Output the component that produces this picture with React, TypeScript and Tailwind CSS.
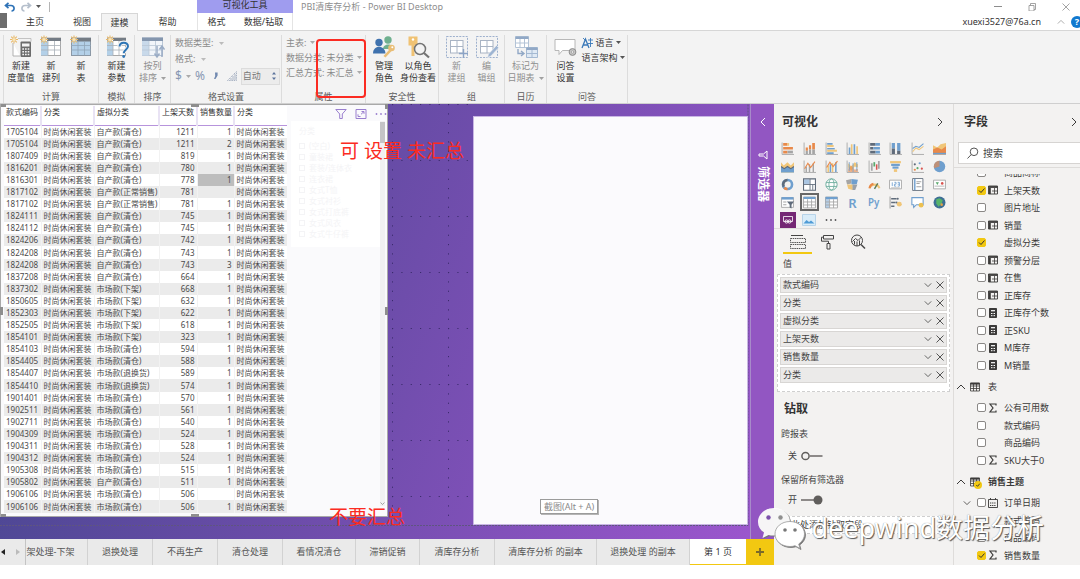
import React from "react";

type Row = [string, string, string, string, string?];

const rows: Row[] = [
  ["1705104", "自产款(清仓)", "1211", "1"],
  ["1705104", "自产款(清仓)", "1211", "2"],
  ["1807409", "自产款(清仓)", "819", "1"],
  ["1816201", "自产款(清仓)", "780", "1"],
  ["1816301", "自产款(清仓)", "778", "1", "sel"],
  ["1817102", "自产款(正常销售)", "781", ""],
  ["1817102", "自产款(正常销售)", "781", "1"],
  ["1824111", "自产款(清仓)", "745", "1"],
  ["1824112", "自产款(清仓)", "745", "1"],
  ["1824206", "自产款(清仓)", "742", "1"],
  ["1824208", "自产款(清仓)", "743", "1"],
  ["1824208", "自产款(清仓)", "743", "3"],
  ["1837208", "自产款(清仓)", "664", "1"],
  ["1837302", "市场款(下架)", "668", "1"],
  ["1850605", "市场款(下架)", "632", "1"],
  ["1852303", "市场款(下架)", "622", "1"],
  ["1852505", "市场款(下架)", "618", "1"],
  ["1854101", "市场款(下架)", "323", "1"],
  ["1854103", "市场款(清仓)", "594", "1"],
  ["1854405", "市场款(清仓)", "588", "1"],
  ["1854407", "市场款(退换货)", "589", "1"],
  ["1854410", "市场款(退换货)", "574", "1"],
  ["1901401", "市场款(清仓)", "570", "1"],
  ["1902511", "市场款(清仓)", "561", "1"],
  ["1902711", "市场款(清仓)", "540", "1"],
  ["1904309", "市场款(清仓)", "524", "1"],
  ["1904311", "市场款(清仓)", "528", "1"],
  ["1904312", "市场款(清仓)", "524", "1"],
  ["1905308", "市场款(清仓)", "515", "1"],
  ["1905802", "自产款(清仓)", "511", "1"],
  ["1906106", "市场款(清仓)", "506", ""],
  ["1906106", "市场款(清仓)", "506", "1"],
];

/* ---------- small glyphs ---------- */

function Caret({ className = "text-[#555]" }: { className?: string }) {
  return (
    <svg viewBox="0 0 5 3" className={"inline-block h-[3px] w-[5px] shrink-0 " + className}>
      <path d="M0 0h5L2.5 3z" fill="currentColor" />
    </svg>
  );
}

function Chevron({ dir, className = "h-2 w-2" }: { dir: "up" | "down" | "left" | "right"; className?: string }) {
  const d = {
    up: "M1 7l4-4 4 4",
    down: "M1 3l4 4 4-4",
    left: "M7 1L3 5l4 4",
    right: "M3 1l4 4-4 4",
  }[dir];
  return (
    <svg viewBox="0 0 10 10" className={"shrink-0 " + className} fill="none" stroke="currentColor" strokeWidth="1">
      <path d={d} />
    </svg>
  );
}

const Spark = () => (
  <g>
    <path d="M5 .5v8M1 4.5h8M2.2 1.7l5.6 5.6M7.8 1.7L2.2 7.3" stroke="#e8b96a" strokeWidth="1.1" />
    <circle cx="5" cy="4.5" r="1.6" fill="#fbe6b8" />
  </g>
);

function BigIcon({ children }: { children: React.ReactNode }) {
  return (
    <svg viewBox="0 0 24 24" className="h-6 w-6" fill="none">
      {children}
    </svg>
  );
}

const icons = {
  measure: (
    <BigIcon>
      <path d="M4 8v13h7" stroke="#a9a9a9" strokeWidth=".9" fill="#fff" />
      <path d="M9 3.5h13v3" stroke="#bdbdbd" strokeWidth=".9" />
      <rect x="11.5" y="6.5" width="10.5" height="15.5" rx="1" fill="#6c6c6c" />
      <rect x="13" y="8.5" width="7.5" height="3" fill="#f3f3f3" />
      <path d="M13.3 14h7M13.3 16.8h7M13.3 19.6h7" stroke="#f3f3f3" strokeWidth="1.5" strokeDasharray="1.7 1" />
      <Spark />
    </BigIcon>
  ),
  column: (
    <BigIcon>
      <rect x="2.5" y="3" width="19" height="17.5" fill="#fff" stroke="#a8a8a8" />
      <rect x="2" y="6" width="7" height="14.5" fill="#b3d0e8" />
      <path d="M8 3h14v3H8z" fill="#747c85" />
      <path d="M2 10.5h20M2 15h20M9 6v14.5M15.5 6v14.5" stroke="#a8b0b8" strokeWidth=".8" />
      <Spark />
    </BigIcon>
  ),
  table: (
    <BigIcon>
      <rect x="2.5" y="3" width="19" height="17.5" fill="#b3d0e8" stroke="#8b98a5" />
      <path d="M8 3h14v3.5H8z" fill="#747c85" />
      <path d="M2 10.5h20M2 15h20M9 6v14.5M15.5 6v14.5" stroke="#8fa5b8" strokeWidth=".8" />
      <Spark />
    </BigIcon>
  ),
  param: (
    <BigIcon>
      <rect x="2.5" y="3" width="18" height="17.5" fill="#fff" stroke="#a8a8a8" />
      <rect x="2" y="6" width="6" height="14.5" fill="#b3d0e8" />
      <path d="M8 3h13v3H8z" fill="#747c85" />
      <path d="M2 10.5h18M2 15h18M8 6v14.5M14 6v14.5" stroke="#a8b0b8" strokeWidth=".8" />
      <path d="M14 12c0-6 9-5.5 9-.8 0 3.3-4.3 3.6-4.3 7" stroke="#f3f3f3" strokeWidth="4" />
      <path d="M14.5 11.5c.3-5 8.5-4.8 8.5-.3 0 3.3-4.3 3.6-4.3 7" stroke="#2e75b5" strokeWidth="2" />
      <circle cx="18.7" cy="21.5" r="1.4" fill="#2e75b5" />
      <Spark />
    </BigIcon>
  ),
  sort: (
    <BigIcon>
      <rect x="1.5" y="3" width="20" height="17.5" fill="#f1f5fa" stroke="#b9c6d6" />
      <path d="M1 2.5h21V6H1z" fill="#8496ae" />
      <path d="M1 6h7v14.5H1z" fill="#c8d9ea" />
      <path d="M1 10.5h20M1 15h20M8 6v14.5M14.5 6v14.5" stroke="#b9c6d6" strokeWidth=".8" />
      <path d="M16 11v10M13.5 18.5L16 22l2.5-3.5M21 22V12M18.5 14.5L21 11l2.5 3.5" stroke="#9aacc5" strokeWidth="1.5" />
    </BigIcon>
  ),
  roles: (
    <BigIcon>
      <circle cx="16" cy="5" r="3.7" fill="#6fb08f" />
      <path d="M11 14c0-6 10.5-6 10.5 0z" fill="#6fb08f" />
      <circle cx="7" cy="7.5" r="3.7" fill="#3f72ae" />
      <path d="M1 18.5c0-9 12-9 12.5 0z" fill="#3f72ae" />
      <circle cx="19.5" cy="13" r="3.3" fill="#e9be77" />
      <path d="M18 14l-6.5 7 2 1.5 7-7.5" fill="#e9be77" />
      <circle cx="20.3" cy="12.3" r="1" fill="#fff" />
    </BigIcon>
  ),
  viewas: (
    <BigIcon>
      <path d="M2.5 1.5h9v9h-3v10.5h-3V10.5h-3z" fill="#f0c273" />
      <circle cx="7" cy="4.5" r="1.2" fill="#fff" />
      <circle cx="14" cy="14" r="5.5" fill="#f3f3f3" stroke="#747474" strokeWidth="1.5" />
      <path d="M18 18l5 4.5" stroke="#747474" strokeWidth="2.2" />
    </BigIcon>
  ),
  newgroup: (
    <BigIcon>
      <rect x="1.5" y="1.5" width="21" height="21" stroke="#93a8c8" strokeDasharray="2 1.2" strokeWidth=".9" />
      <rect x="5.5" y="5.5" width="12.5" height="12.5" fill="#fff" stroke="#a9b4c4" />
      <path d="M12 5v13M5 11.5h13" stroke="#a9b4c4" />
      <path d="M18.5 14v9M14 18.5h9" stroke="#8ba3c5" strokeWidth="1.4" />
    </BigIcon>
  ),
  editgroup: (
    <BigIcon>
      <rect x="1.5" y="1.5" width="21" height="21" stroke="#93a8c8" strokeDasharray="2 1.2" strokeWidth=".9" />
      <rect x="5.5" y="5.5" width="12.5" height="12.5" fill="#fff" stroke="#a9b4c4" />
      <path d="M12 5v13M5 11.5h13" stroke="#a9b4c4" />
      <path d="M12.5 22.5l1-3.5 8-8.5 2.2 2.2-8 8.5z" fill="#9db4d2" stroke="#f3f3f3" strokeWidth=".6" />
    </BigIcon>
  ),
  date: (
    <BigIcon>
      <path d="M1.5 1.5h13v11h-13z" fill="#fff" stroke="#b3c3d6" />
      <path d="M1.5 1.5h13V4h-13z" fill="#91a8c6" />
      <path d="M1.5 8h13M6 4v8.5M10.5 4v8.5" stroke="#b3c3d6" />
      <path d="M12.5 12.5h11v10h-11z" fill="#dfe9f4" stroke="#a4b9d2" />
      <path d="M12.5 12.5h11V15h-11z" fill="#91a8c6" />
      <path d="M12.5 18.5h11M18 15v7.5" stroke="#a4b9d2" />
      <path d="M4 14v4.500h5M7 16l3 2.500L7 21" stroke="#91a8c6" strokeWidth="1.4" />
    </BigIcon>
  ),
  qna: (
    <BigIcon>
      <path d="M2 4.5h20v11H9.5L6 19.5v-4H2z" fill="#fff" stroke="#b0b0b0" strokeWidth=".9" />
      <circle cx="19.5" cy="17" r="3.4" fill="#c4c4c4" stroke="#8c8c8c" />
      <circle cx="19.5" cy="17" r="1.2" fill="#f3f3f3" stroke="#8c8c8c" strokeWidth=".6" />
    </BigIcon>
  ),
};

/* ---------- ribbon ---------- */

function BigButton({ icon, l1, l2, muted, caret, className }: { icon: React.ReactNode; l1: string; l2: string; muted?: boolean; caret?: boolean; className: string }) {
  return (
    <button type="button" className={"flex shrink-0 flex-col items-center whitespace-nowrap leading-3 " + (muted ? "text-[#8f8f8f] " : "text-[#333] ") + className}>
      {icon}
      <span className="mt-px">{l1}</span>
      <span className="flex items-center gap-1">
        {l2}
        {caret && <Caret className="text-[#a0a0a0]" />}
      </span>
    </button>
  );
}

function Group({ title, className, children }: { title: string; className: string; children: React.ReactNode }) {
  return (
    <section className={"relative flex shrink-0 flex-col border-r border-[#dcdcdc] " + className}>
      <div className="flex h-14 justify-center">{children}</div>
      <h3 className="text-center leading-3 text-[#5c5c5c]">{title}</h3>
    </section>
  );
}

function DropText({ label, value }: { label: string; value?: string }) {
  return (
    <button type="button" className="flex items-center gap-0.5 whitespace-nowrap text-left leading-[15px]">
      <span>{label}</span>
      {value && <span>{value}</span>}
      <Caret className="ml-0.5 text-[#aaa]" />
    </button>
  );
}

function Ribbon() {
  return (
    <div className="flex border-b border-[#cfcfcf] bg-[#f3f3f3] pt-1 pl-[3px] text-[9px]">
      <Group title="计算" className="w-24 border-l">
        <BigButton icon={icons.measure} l1="新建" l2="度量值" className="w-8" />
        <BigButton icon={icons.column} l1="新" l2="建列" className="w-7" />
        <BigButton icon={icons.table} l1="新" l2="表" className="w-8" />
      </Group>
      <Group title="模拟" className="w-9">
        <BigButton icon={icons.param} l1="新建" l2="参数" className="w-8" />
      </Group>
      <Group title="排序" className="w-9">
        <BigButton icon={icons.sort} l1="按列" l2="排序" muted caret className="w-8" />
      </Group>
      <Group title="格式设置" className="w-[111px]">
        <div className="flex w-full flex-col pl-1 text-[#8a8a8a]">
          <button type="button" className="flex items-center gap-1.5 leading-4">数据类型:<Caret className="text-[#bbb]" /></button>
          <button type="button" className="flex items-center gap-1.5 leading-4">格式:<Caret className="text-[#bbb]" /></button>
          <div className="flex items-center gap-1 text-[#8797b2]">
            <button type="button" className="flex items-center gap-1 text-[12px]">$<Caret className="text-[#aaa]" /></button>
            <button type="button" className="text-[12px]">%</button>
            <button type="button" aria-label="千位分隔符" className="px-1">
              <svg viewBox="0 0 6 10" className="h-2.5 w-1.5"><path d="M2 1.5h2.6v3L2.5 8H1l1.2-3z" fill="#7189b0" /></svg>
            </button>
            <svg viewBox="0 0 10 10" className="h-2.5 w-2.5 shrink-0"><path d="M.5 9.5L9.5.5v9z" fill="none" stroke="#a9b3c4" strokeDasharray="1.5 .8" /><path d="M4 9V7M6 9V5M8 9V3" stroke="#a9b3c4" /></svg>
            <label className="flex h-[17px] w-[39px] items-center border border-[#dcdcdc] bg-[#ececec] px-px text-[#777]">
              <input aria-label="小数位数" defaultValue="自动" className="w-6 bg-transparent outline-none" />
              <svg viewBox="0 0 6 10" className="ml-1 h-2.5 w-1.5 shrink-0"><path d="M1 3.5L3 1l2 2.5zM1 6.5L3 9l2-2.5z" fill="#5b739c" /></svg>
            </label>
          </div>
        </div>
      </Group>
      <Group title="属性" className="w-21">
        <div className="flex w-full flex-col pl-1 text-[#8a8a8a]">
          <DropText label="主表:" />
          <DropText label="数据分类:" value="未分类" />
          <DropText label="汇总方式:" value="未汇总" />
        </div>
        <div className="absolute top-1 -right-px h-[59px] w-[50px] rounded-sm border-2 border-[#fb2b22]" />
      </Group>
      <Group title="安全性" className="w-[73px]">
        <BigButton icon={icons.roles} l1="管理" l2="角色" className="w-8" />
        <BigButton icon={icons.viewas} l1="以角色" l2="身份查看" className="w-9" />
      </Group>
      <Group title="组" className="w-[66px]">
        <BigButton icon={icons.newgroup} l1="新" l2="建组" muted className="w-[30px]" />
        <BigButton icon={icons.editgroup} l1="编" l2="辑组" muted className="w-[30px]" />
      </Group>
      <Group title="日历" className="w-[42px]">
        <BigButton icon={icons.date} l1="标记为" l2="日期表" muted caret className="w-10" />
      </Group>
      <Group title="问答" className="w-[81px]">
        <BigButton icon={icons.qna} l1="问答" l2="设置" className="w-8" />
        <div className="flex flex-col text-[#333]">
          <button type="button" className="flex items-center gap-0.5 whitespace-nowrap leading-[15px]">
            <svg viewBox="0 0 12 12" className="h-3 w-3" fill="none" stroke="#3a78b8"><path d="M1 11l3.5-9L8 11M2.5 8h4" strokeWidth="1.3" /><path d="M7 3h5M9.5 1v9M7 6.5h5M2 1l2 2" strokeWidth=".9" /></svg>
            语言<Caret />
          </button>
          <button type="button" className="flex items-center gap-0.5 whitespace-nowrap leading-[15px]">语言架构<Caret /></button>
        </div>
      </Group>
    </div>
  );
}

function Header() {
  return (
    <header className="text-[9px] text-[#333]">
      <div className="flex h-[13px] items-center">
        <div className="flex w-[197px] shrink-0 items-center gap-1 pl-1">
          <button type="button" aria-label="撤消"><svg viewBox="0 0 12 10" className="h-2.5 w-3" fill="none" stroke="#2f73b7" strokeWidth="1.7"><path d="M4.5.8L1.5 3.5l3 2.7M1.5 3.5H7c4 0 4 5.5.5 5.5" /></svg></button>
          <button type="button" aria-label="恢复"><svg viewBox="0 0 12 10" className="h-2.5 w-3" fill="none" stroke="#b5bfcc" strokeWidth="1.7"><path d="M7.5.8l3 2.7-3 2.7M10.5 3.5H5C1 3.5 1 9 4.5 9" /></svg></button>
          <Caret />
          <span className="ml-1 h-2.5 w-px bg-[#b5b5b5]" />
        </div>
        <div className="h-[13px] w-24 shrink-0 bg-[#9f9cef] text-center leading-[9px]">可视化工具</div>
        <h1 className="pl-2 leading-[10px] text-[#8d8d8d]">PBI清库存分析 - Power BI Desktop</h1>
        <div className="ml-auto flex items-center gap-[26px] pr-2.5 text-[#8d8d8d]">
          <button type="button" aria-label="最小化"><svg viewBox="0 0 8 8" className="h-2 w-2" stroke="currentColor"><path d="M0 3.5h8" /></svg></button>
          <button type="button" aria-label="还原"><svg viewBox="0 0 8 8" className="h-2 w-2" stroke="currentColor" fill="none" strokeWidth=".8"><path d="M1 2.5h5V8H1zM2.5 2.5V.5h5v6H6" /></svg></button>
          <button type="button" aria-label="关闭"><svg viewBox="0 0 8 8" className="h-2 w-2" stroke="currentColor" strokeWidth=".8"><path d="M.5.5l7 7M7.5.5l-7 7" /></svg></button>
        </div>
      </div>
      <nav className="flex h-[18px] items-stretch border-b border-[#d6d6d6]">
        <button type="button" aria-label="文件" className="mb-0.5 w-[7px] bg-[#6d6d6d]" />
        <button type="button" className="w-14">主页</button>
        <button type="button" className="w-[38px]">视图</button>
        <button type="button" className="-mb-px w-[37px] border border-b-0 border-[#d6d6d6] bg-[#f3f3f3]">建模</button>
        <button type="button" className="w-[59px]">帮助</button>
        <button type="button" className="w-[38px] border-l border-[#e4e4e4]">格式</button>
        <button type="button" className="w-[58px] border-r border-[#e4e4e4]">数据/钻取</button>
        <div className="ml-auto flex items-center">
          <span>xuexi3527@76a.cn</span>
          <Chevron dir="up" className="ml-4 h-2 w-2 text-[#999]" />
          <button type="button" aria-label="帮助" className="-mr-[3px] ml-1.5 h-3 w-3 rounded-full bg-[#1179cf] leading-3 font-bold text-white">?</button>
        </div>
      </nav>
      <Ribbon />
    </header>
  );
}

/* ---------- report canvas ---------- */

function DataTable() {
  const th = "border-r-2 border-[#e9e3f4] px-0.5 font-normal";
  const td = "border-r border-[#f2f2f2] px-0.5";
  return (
    <table className="h-[407px] w-[283px] table-fixed border-collapse bg-white text-[8px] leading-3 whitespace-nowrap text-[#4a4a4a]">
      <colgroup>
        <col className="w-[37px]" />
        <col className="w-[53px]" />
        <col className="w-[65px]" />
        <col className="w-[38px]" />
        <col className="w-[37px]" />
        <col className="w-[53px]" />
      </colgroup>
      <thead className="h-[19px] text-left text-[#333]">
        <tr className="h-[19px] border-b border-b-[#b794dc] align-top">
          <th className={th}>款式编码</th>
          <th className={th}>分类</th>
          <th className={th}>虚拟分类</th>
          <th className={th + " text-right"}>上架天数</th>
          <th className={th + " text-right"}>销售数量</th>
          <th className="px-0.5 font-normal">分类</th>
        </tr>
      </thead>
      <tbody>
        {rows.map((r, i) => (
          <tr key={i} className={i % 2 ? "bg-[#ebebeb]" : "bg-white"}>
            <td className={td}>{r[0]}</td>
            <td className={td}>时尚休闲套装</td>
            <td className={td}>{r[1]}</td>
            <td className={td + " text-right"}>{r[2]}</td>
            <td className={td + " text-right" + (r[4] ? " bg-[#bdbdbd]" : "")}>{r[3]}</td>
            <td className="px-0.5">时尚休闲套装</td>
          </tr>
        ))}
      </tbody>
    </table>
  );
}

const slicer = ["(空白)", "童装裙", "套装/连体衣", "连衣裙", "女式T恤", "女式衬衫", "女式打底裤", "女式风衣", "女式牛仔裤"];

function Canvas() {
  return (
    <main className="relative flex h-[435px] min-w-0 flex-1 overflow-hidden bg-[linear-gradient(112deg,#46468f_8%,#6e4dab_52%,#9b56cd_100%)]">
      <svg className="absolute inset-0 h-full w-full" aria-hidden="true">
        <defs>
          <pattern id="dots" width="56" height="56" patternUnits="userSpaceOnUse">
            <path d="M0 .5h56M.5 0v56" stroke="#3a2a6c" strokeDasharray="1.2 8.13" fill="none" />
          </pattern>
        </defs>
        <rect x="392" y="0" width="80" height="420" fill="url(#dots)" />
        <path d="M0 421.5h748V0" stroke="#5f5580" strokeDasharray="2 1" fill="none" />
      </svg>

      <section className="relative flex h-[413px] w-[388px] shrink-0 items-start border border-[#a9a9a9] bg-[#fafafc] pt-px pl-[3px]">
        <DataTable />
        <div className="ml-1 flex min-w-0 flex-1 flex-col">
          <div className="flex h-[15px] items-center justify-end gap-2 text-[#9a7fcf]">
            <svg viewBox="0 0 12 12" className="h-3 w-3" fill="none" stroke="currentColor"><path d="M.8 1.5h10.4L7.3 6v4.500H4.700V6z" /></svg>
            <svg viewBox="0 0 12 12" className="h-3 w-3" fill="none" stroke="currentColor"><path d="M1 1.5h10v9H1zM6.500 3.500H9v2.300M9 3.500L6 6.300M5.500 8.500H3V6.300" /></svg>
            <svg viewBox="0 0 12 4" className="h-1 w-3" fill="currentColor"><circle cx="1.5" cy="2" r=".9" /><circle cx="6" cy="2" r=".9" /><circle cx="10.5" cy="2" r=".9" /></svg>
          </div>
          <div className="flex">
            <div className="h-[126px] flex-1 overflow-hidden bg-white pt-1 pl-2 text-[8px] leading-[11px] text-[#f4f4f6]">
              <p className="mb-1">分类</p>
              {slicer.map((s) => (
                <p key={s} className="flex items-center gap-1"><span className="h-1.5 w-1.5 border border-[#f4f4f6]" />{s}</p>
              ))}
            </div>
            <div className="mr-0.5 flex h-[385px] w-[5px] flex-col justify-between bg-[#f1f1f2]">
              <div className="mt-px h-[21px] bg-[#c4c4c6]" />
              <Chevron dir="down" className="h-[5px] w-[5px] text-[#555]" />
            </div>
          </div>
        </div>
        <span className="absolute -top-px left-0 h-[3px] w-[5px] bg-[#8e8e8e]" />
        <span className="absolute -top-px left-[190px] h-[3px] w-2 bg-[#8e8e8e]" />
        <span className="absolute -top-px -right-px h-[5px] w-[3px] bg-[#8e8e8e]" />
        <span className="absolute top-[202px] -left-px h-2 w-[3px] bg-[#8e8e8e]" />
        <span className="absolute top-[202px] -right-px h-2 w-[3px] bg-[#8e8e8e]" />
        <span className="absolute -bottom-px left-0 h-[3px] w-[5px] bg-[#8e8e8e]" />
        <span className="absolute -bottom-px left-[190px] h-[3px] w-2 bg-[#8e8e8e]" />
      </section>

      <section className="relative mt-3 mr-0.5 ml-auto flex h-[409px] w-[275px] shrink-0 items-end border border-[#c9b6e4] bg-[#fbfafd] pb-2.5 pl-[66px]">
        <div className="border border-[#9b9b9b] bg-white px-[3px] text-[9px] leading-[13px] whitespace-nowrap text-[#8b8b8b] shadow-[1px_1px_0_#b5b5b5]">截图(Alt + A)</div>
      </section>

      <p className="absolute top-[34px] left-[340px] text-[19px] leading-[26px] whitespace-nowrap text-[#fb2b22]">可 设置 未汇总</p>
      <p className="absolute top-[400px] left-[329px] text-[19px] leading-[26px] whitespace-nowrap text-[#fb2b22]">不要汇总</p>
    </main>
  );
}

const pages: [string, string][] = [
  ["架处理-下架", "w-[62px] pr-3"],
  ["退换处理", "w-[65px]"],
  ["不再生产", "w-[65px]"],
  ["清仓处理", "w-[65px]"],
  ["看情况清仓", "w-[73px]"],
  ["滞销促销", "w-16"],
  ["清库存分析", "w-[75px]"],
  ["清库存分析 的副本", "w-[102px]"],
  ["退换处理 的副本", "w-[93px]"],
];

function PageTabs() {
  return (
    <nav className="flex h-[26px] bg-[#eaeaea] text-[9px] whitespace-nowrap text-[#555]">
      <div className="flex w-[26px] items-center justify-between border-r border-[#c4c4c4] px-px">
        <button type="button" aria-label="上一页"><svg viewBox="0 0 4 6" className="h-1.5 w-1"><path d="M4 0v6L0 3z" fill="#222" /></svg></button>
        <button type="button" aria-label="下一页" className="pr-1"><svg viewBox="0 0 4 6" className="h-1.5 w-1"><path d="M0 0v6l4-3z" fill="#bbb" /></svg></button>
      </div>
      {pages.map(([name, w]) => (
        <button type="button" key={name} className={"border-r border-[#d2d2d2] " + w}>{name}</button>
      ))}
      <button type="button" className="w-14 border-b border-[#f2c811] bg-white text-[#333]">第 1 页</button>
      <button type="button" aria-label="新建页" className="flex flex-1 items-center justify-center bg-[#f2c811]">
        <svg viewBox="0 0 8 8" className="h-2 w-2" stroke="#7a6a2a" strokeWidth="1.8"><path d="M4 0v8M0 4h8" /></svg>
      </button>
    </nav>
  );
}

/* ---------- visualizations pane ---------- */

const O = "#e8894a";
const B = "#6f9fce";
const D = "#5f6b7a";
const Y = "#f0c679";
const G = "#a5a5a5";
const axis = <path d="M1 .5v11h11" stroke={G} fill="none" strokeWidth=".8" />;

const vizIcons: [string, React.ReactNode][] = [
  ["堆积条形图", <>{axis}<path d="M2 1h4v2.5H2zM2 4.5h9V7H2zM2 8h4v2.5H2z" fill={O} /><path d="M6 1h1.5v2.5H6z" fill={Y} /><path d="M6 8h5v2.5H6z" fill={G} /></>],
  ["堆积柱形图", <>{axis}<path d="M2.5 5h2v3h-2zM5.5 3h2v4h-2zM8.5 1H11v6H8.5z" fill={O} /><path d="M2.5 8h2v3h-2zM5.5 7h2v4h-2zM8.5 7H11v4H8.5z" fill={G} /></>],
  ["簇状条形图", <>{axis}<path d="M2 1h5v1.5H2zM2 5.5h7V7H2zM2 9.5h6V11H2z" fill={B} /><path d="M2 2.8h6v1.7H2zM2 7.200h9v1.700H2z" fill={Y} /></>],
  ["簇状柱形图", <>{axis}<path d="M2.5 5H4v6H2.5zM7 2h1.5v9H7z" fill={B} /><path d="M4.5 2H6v9H4.5zM9.5 4H11v7H9.5z" fill={Y} /></>],
  ["百分比堆积条形图", <>{axis}<path d="M2 1h5v2.5H2zM2 4.5h3V7H2zM2 8h5v2.5H2z" fill={D} /><path d="M7 1h4v2.5H7zM5 4.5h6V7H5zM7 8h4v2.5H7z" fill={B} /></>],
  ["百分比堆积柱形图", <>{axis}<path d="M2.5 1h3v5h-3zM7.5 1h3v7h-3z" fill={B} /><path d="M2.5 6h3v5h-3zM7.5 8h3v3h-3z" fill={D} /></>],
  ["折线图", <>{axis}<path d="M1.5 9l3-3.5 3 1.5L11.5 4" stroke={Y} fill="none" /><path d="M1.5 6l3-2 3 1L11.5 1.5" stroke={B} fill="none" /></>],
  ["分区图", <><path d="M0 11.5V3l4 2 3-3 5-1v10.5z" fill={Y} /><path d="M0 11.5V7l4-2 4 2 4-3v7.5z" fill={O} /><path d="M0 11.5V10h12v1.5z" fill={B} /></>],
  ["堆积面积图", <><path d="M0 11.5V2l2.5 3L6 2l3 3 3-3v9.500z" fill={Y} /><path d="M0 11.500V6l3 2 3-2 3 2 3-2v5.500z" fill={B} /><path d="M0 6l3 2 3-2 3 2 3-2" stroke={D} fill="none" /></>],
  ["折线和堆积柱形图", <>{axis}<path d="M3 6v5M6 4v7M9.5 3v8" stroke={G} strokeWidth="1.3" /><path d="M1.5 8l3-5 2.500 4 4-5.500" stroke={O} fill="none" /></>],
  ["折线和簇状柱形图", <>{axis}<path d="M3 5v6M7 3v8" stroke={Y} strokeWidth="1.4" /><path d="M5 4v7M10 2v9" stroke={B} strokeWidth="1.4" /><path d="M1.5 7l3-5 3 4 4-5" stroke={O} fill="none" /></>],
  ["功能区图", <>{axis}<path d="M2 3l3 3 3-4 3 2v3L8 6 5 10 2 7z" fill={Y} /><path d="M2 8l3-3 3 4 3-1v3H2z" fill={O} opacity=".6" /><path d="M3 2v8M6.5 3v8M10 2v8" stroke={B} strokeWidth=".8" /></>],
  ["瀑布图", <>{axis}<path d="M3.5 3v7M10 1v7" stroke={G} strokeWidth="1.6" /><path d="M5.800 2v4" stroke="#5aa96d" strokeWidth="1.6" /><path d="M8 4v5" stroke="#d9534f" strokeWidth="1.4" /></>],
  ["漏斗图", <><path d="M1 1h10v2H1z" fill={Y} /><path d="M2 3.5h8v2H2z" fill={B} /><path d="M3.200 6h5.600v2H3.200z" fill={B} /><path d="M4.500 8.500h3v2.500h-3z" fill={Y} /></>],
  ["散点图", <>{axis}<circle cx="3.5" cy="4" r="1" fill={D} /><circle cx="6" cy="7.5" r="1" fill="#5aa96d" /><circle cx="8" cy="3" r="1" fill={B} /><circle cx="10" cy="8" r="1" fill="#d9534f" /><circle cx="3.5" cy="9" r="1" fill={O} /></>],
  ["饼图", <><circle cx="6" cy="6" r="5.3" fill={B} /><path d="M6 6V.7A5.3 5.3 0 0 0 1 7.500z" fill={O} opacity=".65" /></>],
  ["环形图", <><circle cx="6" cy="6" r="4.2" fill="none" stroke={B} strokeWidth="2.4" /><path d="M6 1.8A4.2 4.2 0 0 0 2.500 8" fill="none" stroke={D} strokeWidth="2.4" /><path d="M3 9a4.2 4.2 0 0 0 3 1.200" fill="none" stroke={O} strokeWidth="2.4" /></>],
  ["树状图", <><path d="M.5.8h11v10.5H.5z" fill="#fff" stroke={D} /><path d="M1 1.500h5v4H1z" fill={B} opacity=".6" /><path d="M6.5 1v10M.5 6h11M9 6v5" stroke={D} strokeWidth=".8" /></>],
  ["地图", <><circle cx="6" cy="6" r="5.2" fill="#fff" stroke="#6bab9b" strokeWidth=".9" /><ellipse cx="6" cy="6" rx="2.4" ry="5.2" fill="none" stroke="#6bab9b" strokeWidth=".8" /><path d="M1 4.200h10M1 7.800h10" stroke="#6bab9b" strokeWidth=".8" /></>],
  ["着色地图", <><path d="M0 2l5-1v4L1 6z" fill={G} /><path d="M5 1l6 .5-1 4-5 .5z" fill={B} /><path d="M1 6l5 0 0 5-4-1z" fill={Y} /><path d="M6 6l4.500 0-2 5L6 11z" fill={D} opacity=".6" /></>],
  ["仪表", <><path d="M1.500 9.500a4.700 4.700 0 0 1 9 0" fill="none" stroke={Y} strokeWidth="2" /><path d="M1.500 9.500A4.700 4.700 0 0 1 5 5.300" fill="none" stroke={O} strokeWidth="2" /><path d="M6 10l3-5" stroke="#5c7a55" strokeWidth="1.3" /></>],
  ["卡片图", <><path d="M.5 2h11v8H.5z" fill="#fff" stroke={G} strokeWidth=".8" /><path d="M3 4v3.500M5 4h1.500v1.700H5v1.800h1.700M8 4h1.600v3.500H8M8 5.700h1.600" stroke={B} strokeWidth=".8" fill="none" /><path d="M2 9h8" stroke={G} strokeWidth=".6" /></>],
  ["多行卡", <><path d="M1.500.5h9.500v11H1.500z" fill="#fff" stroke={D} strokeWidth=".8" /><path d="M3.500 1v10" stroke={B} strokeWidth="1.3" /><path d="M5 3.500h4.500M5 5h3M5 8h4.500" stroke={G} /></>],
  ["KPI", <><path d="M.5 2h11v8H.5z" fill="#fff" stroke={G} strokeWidth=".8" /><path d="M1.500 7.500h9" stroke={G} strokeWidth=".7" /><path d="M2.500 4L4 6.500 5.500 4z" fill="#5aa96d" /><circle cx="8.500" cy="5" r="1.200" fill="#d9534f" /></>],
  ["切片器", <><path d="M.5 1.500h11v9H.5z" fill="#fff" stroke={G} strokeWidth=".8" /><path d="M.5 1h11v2.300H.5z" fill={B} /><path d="M2 5.500h3M2 8h3" stroke={G} /><path d="M5.500 5H12L9.700 8v3.500l-1.700-1V8z" fill={D} /></>],
  ["表", <><path d="M.5 1h11v10H.5z" fill="#fff" stroke={G} strokeWidth=".8" /><path d="M.5.8h11v2H.5z" fill={B} /><path d="M.5 5.500h11M.5 8.300h11M4.200 3v8M7.900 3v8" stroke={G} strokeWidth=".8" /></>],
  ["矩阵", <><path d="M.5 1h11v10H.5z" fill="#fff" stroke={G} strokeWidth=".8" /><path d="M.5.8h11v2.200H.5z" fill={B} /><path d="M.5 3h3.500v8H.5z" fill={B} opacity=".5" /><path d="M.5 5.500h11M.5 8.300h11M4.200 3v8M7.900 3v8" stroke={G} strokeWidth=".8" /></>],
  ["R", <text x="2" y="11" fontSize="12" fontWeight="600" fill={B}>R</text>],
  ["Python", <text x="0" y="9" fontSize="9" fontWeight="600" fill={B}>Py</text>],
  ["关键影响者", <><path d="M1 .5v11" stroke={G} /><path d="M2 2.500h5M2 6h4M2 9.500h3" stroke={D} strokeWidth="1.3" /><circle cx="8" cy="2.500" r="1" fill={D} /><circle cx="7" cy="6" r="1" fill={D} /><circle cx="9.500" cy="7.500" r="2.300" fill={Y} /></>],
  ["问答", <><path d="M.8 1.500h10.400v6.500H5L2.500 10.500V8H.8z" fill="#fff" stroke={B} /><circle cx="9.300" cy="8.500" r="2.200" fill="#ecc04f" /></>],
  ["ArcGIS", <><circle cx="6" cy="6" r="5.5" fill="#3d6f94" /><path d="M3 3l3-1 3 2-1 3-3 3-2-3z" fill="#57b46a" /><circle cx="8" cy="8" r="1.2" fill="#e0a24a" /></>],
];

function VizPane() {
  return (
    <aside className="flex w-[180px] shrink-0 flex-col border-r border-[#dedcda] bg-[#f3f2f1] text-[9px] text-[#444]">
      <div className="flex h-9 items-center justify-between px-2">
        <h2 className="text-[12px] font-bold text-[#333]">可视化</h2>
        <button type="button" aria-label="折叠可视化"><Chevron dir="right" className="h-2.5 w-2.5" /></button>
      </div>
      <div className="grid auto-rows-[16px] grid-cols-8 gap-y-0.5 border-b border-[#dedcda] px-[3px]">
        {vizIcons.map(([name, art]) => (
          <button type="button" key={name} aria-label={name} className={"flex items-center justify-center " + (name === "表" ? "mx-0.5 outline-2 -outline-offset-1 outline-[#666]" : "")}>
            <svg viewBox="0 0 12 12" className="h-[13px] w-[13px] shrink-0">{art}</svg>
          </button>
        ))}
        <button type="button" aria-label="Power Apps" className="flex items-center justify-center">
          <svg viewBox="0 0 16 16" className="h-4 w-4"><path d="M0 0h16v16H0z" fill="#742774" /><path d="M3.500 4.500h9v5h-9z" fill="none" stroke="#fff" strokeWidth=".8" /><circle cx="6.500" cy="9.500" r="1.600" fill="none" stroke="#fff" strokeWidth=".9" /><circle cx="9.500" cy="9.500" r="1.600" fill="none" stroke="#fff" strokeWidth=".9" /></svg>
        </button>
        <button type="button" aria-label="图像" className="flex items-center justify-center">
          <svg viewBox="0 0 14 12" className="h-3 w-3.5"><path d="M.5.5h13v11H.5z" fill="#d9ecf8" stroke="#b7d3e8" /><path d="M1.500 9.500l3-3.500 2.500 2 2-1.500 3.500 3z" fill="#4f9bd6" /></svg>
        </button>
        <button type="button" aria-label="更多视觉对象" className="flex items-center justify-center">
          <svg viewBox="0 0 12 4" className="h-1 w-3" fill="#555"><circle cx="1.5" cy="2" r=".9" /><circle cx="6" cy="2" r=".9" /><circle cx="10.5" cy="2" r=".9" /></svg>
        </button>
      </div>
      <div className="flex gap-px pt-[3px] pl-[9px]">
        <button type="button" aria-label="字段" className="flex h-[22px] w-[29px] justify-center border-b-2 border-[#f2c811] pt-0.5">
          <svg viewBox="0 0 16 16" className="h-4 w-4" fill="none" stroke="#444"><path d="M1 1.500h12" /><path d="M.5 4.500h15v4H.5zM.5 10.500h15v4H.5z" strokeDasharray="1.5 .7" strokeWidth=".9" /></svg>
        </button>
        <button type="button" aria-label="格式" className="flex h-[22px] w-[29px] justify-center pt-0.5">
          <svg viewBox="0 0 16 16" className="h-4 w-4" fill="none" stroke="#444"><path d="M3.500 1.500h10v3.500h-10zM3.500 3.200H1.500v4H8.500v2.300M7 9.500h3v5.500H7z" /></svg>
        </button>
        <button type="button" aria-label="分析" className="flex h-[22px] w-[29px] justify-center pt-0.5">
          <svg viewBox="0 0 16 16" className="h-4 w-4" fill="none" stroke="#444"><circle cx="7" cy="6.500" r="5.500" /><path d="M11 10.500l4 4" strokeWidth="1.4" /><path d="M2.500 7.500l3-3 2.500 2 3.500-3.500M4.500 7v3.500M7 7.500V12M9.500 6.500V11" /></svg>
        </button>
      </div>
      <h3 className="pt-1 pl-[9px] leading-3">值</h3>
      <ul className="mx-[3px] mt-1 flex flex-col gap-0.5 border border-dashed border-[#cfcfcf] bg-white p-0.5 pb-2">
        {["款式编码", "分类", "虚拟分类", "上架天数", "销售数量", "分类"].map((f, i) => (
          <li key={i} className="flex h-4 items-center border border-[#d8d6d4] bg-[#ebeae9] px-0.5">
            <span className="flex-1">{f}</span>
            <button type="button" aria-label={f + " 选项"}><Chevron dir="down" className="mr-1 h-2 w-2" /></button>
            <button type="button" aria-label={"移除 " + f}><svg viewBox="0 0 8 8" className="h-2 w-2" stroke="#444" strokeWidth=".9"><path d="M.5.5l7 7M7.500.5l-7 7" /></svg></button>
          </li>
        ))}
      </ul>
      <h2 className="pt-2 pl-[10px] text-[12px] leading-[18px] font-bold text-[#333]">钻取</h2>
      <p className="pt-2.5 pl-[7px] leading-3">跨报表</p>
      <label className="flex items-center gap-1 pt-2.5 pl-3.5 leading-3">
        关
        <input type="checkbox" role="switch" className="peer sr-only" />
        <svg viewBox="0 0 22 10" className="h-2.5 w-[22px]" fill="none" stroke="#605e5c"><path d="M9 5h12.500" strokeWidth="1.4" /><circle cx="4.500" cy="5" r="3.600" strokeWidth="1.5" /></svg>
      </label>
      <p className="pt-3 pl-[7px] leading-3">保留所有筛选器</p>
      <label className="flex items-center gap-1 pt-2 pl-3.5 leading-3">
        开
        <input type="checkbox" role="switch" defaultChecked className="peer sr-only" />
        <svg viewBox="0 0 22 10" className="h-2.5 w-[22px]"><path d="M0 5h14" stroke="#605e5c" strokeWidth="1.4" /><circle cx="17" cy="5" r="4.500" fill="#605e5c" /></svg>
      </label>
      <div className="mx-[3px] mt-2.5 border border-dashed border-[#cfcfcf] bg-white pl-1 leading-4">在此处添加钻取字段</div>
    </aside>
  );
}

/* ---------- fields pane ---------- */

type Kind = "" | "col" | "calc" | "sum" | "date";

function FieldIcon({ kind }: { kind: Kind }) {
  return (
    <svg viewBox="0 0 10 10" className="h-2.5 w-2.5 shrink-0" fill="none" stroke="#3b3a39">
      {kind === "col" && <><path d="M.5 1h9v8h-9z" strokeWidth=".9" /><path d="M.5 2h9" strokeWidth="1.8" /><path d="M1.800 3v6" strokeWidth="2" /><path d="M4 6h5.500M6.500 3v6" strokeWidth=".8" /></>}
      {kind === "calc" && <><path d="M1.500.5h7v9h-7z" fill="#3b3a39" /><path d="M3 2.700h4" stroke="#fff" strokeWidth="1.2" /><path d="M3 5.500h4M3 7.700h4" stroke="#fff" strokeDasharray="1 .5" /></>}
      {kind === "sum" && <path d="M8 2.500V1H2l3 4-3 4h6V7.500" strokeWidth="1.2" />}
      {kind === "date" && <><path d="M.5 1.500h9v8h-9zM2.500 0v2M7.500 0v2" strokeWidth=".9" /><path d="M2 5h6M2 7.500h6" strokeDasharray="1.3 .8" strokeWidth="1.2" /></>}
    </svg>
  );
}

function Field({ name, kind = "", on, expandable }: { name: string; kind?: Kind; on?: boolean; expandable?: boolean }) {
  return (
    <label className="flex items-center gap-0.5 whitespace-nowrap">
      <span className="flex w-[21px] shrink-0 justify-center pl-1">{expandable && <Chevron dir="down" className="h-2 w-2" />}</span>
      <span className="relative flex h-[9px] w-[9px] shrink-0">
        <input type="checkbox" defaultChecked={on} className="h-[9px] w-[9px] appearance-none rounded-[2px] border border-[#8a8886] bg-white checked:border-[#f2c811] checked:bg-[#f2c811]" />
        {on && <svg viewBox="0 0 9 9" className="pointer-events-none absolute inset-0" fill="none" stroke="#333"><path d="M2 4.500l2 2 3.500-4" /></svg>}
      </span>
      <FieldIcon kind={kind} />
      <span className="pl-1">{name}</span>
    </label>
  );
}

function TableHead({ name, bold, badge }: { name: string; bold?: boolean; badge?: boolean }) {
  return (
    <button type="button" className="flex h-[25px] items-center pl-0.5">
      <Chevron dir="up" className="h-2.5 w-2.5" />
      <span className="relative ml-1">
        <svg viewBox="0 0 10 10" className="h-2.5 w-2.5" fill="none" stroke="#3b3a39"><path d="M.5 1h9v8h-9zM.5 4h9M.5 6.500h9M3.500 2v7M6.500 2v7" strokeWidth=".8" /><path d="M.5 1.700h9" strokeWidth="1.8" /></svg>
        {badge && <svg viewBox="0 0 9 9" className="absolute top-1 left-1 h-2 w-2"><circle cx="4.500" cy="4.500" r="4.500" fill="#f2c811" /><path d="M2.500 4.500L4 6l2.500-3" fill="none" stroke="#333" /></svg>}
      </span>
      <span className={"pl-2 " + (bold ? "font-bold" : "")}>{name}</span>
    </button>
  );
}

function FieldsPane() {
  return (
    <aside className="flex w-[126px] shrink-0 flex-col bg-[#f3f2f1] text-[9px] text-[#3b3a39]">
      <div className="flex h-9 items-center justify-between pr-px pl-2.5">
        <h2 className="text-[12px] font-bold text-[#333]">字段</h2>
        <button type="button" aria-label="折叠字段"><Chevron dir="right" className="h-2.5 w-2.5" /></button>
      </div>
      <label className="mt-0.5 ml-1 flex h-[22px] items-center gap-1 border border-r-0 border-[#d6d4d2] bg-white pl-2">
        <svg viewBox="0 0 12 12" className="h-3 w-3 shrink-0" fill="none" stroke="#555"><circle cx="7" cy="4.800" r="3.800" /><path d="M4.300 7.500L.5 11.500" /></svg>
        <input placeholder="搜索" aria-label="搜索" className="w-full min-w-0 bg-transparent text-[10px] outline-none placeholder:text-[#444]" />
      </label>
      <div className="mt-[3px] border-t border-[#dedcda] pt-1.5">
        <div className="overflow-hidden">
          <div className="-mt-2.5 grid h-[210px] auto-rows-fr">
            <Field name="商品简称" />
            <Field name="上架天数" kind="col" on />
            <Field name="图片地址" />
            <Field name="销量" kind="col" />
            <Field name="虚拟分类" on />
            <Field name="预警分层" kind="col" />
            <Field name="在售" kind="col" />
            <Field name="正库存" kind="col" />
            <Field name="正库存个数" kind="calc" />
            <Field name="正SKU" kind="calc" />
            <Field name="M库存" kind="calc" />
            <Field name="M销量" kind="calc" />
          </div>
          <TableHead name="表" />
          <div className="grid h-[70px] auto-rows-fr">
            <Field name="公有可用数" kind="sum" />
            <Field name="款式编码" />
            <Field name="商品编码" />
            <Field name="SKU大于0" kind="sum" />
          </div>
          <TableHead name="销售主题" bold badge />
          <div className="grid h-[70px] auto-rows-fr">
            <Field name="订单日期" kind="date" expandable />
            <Field name="款式编码" />
            <Field name="商品编码" />
            <Field name="销售数量" kind="sum" on />
          </div>
        </div>
      </div>
    </aside>
  );
}

function Watermark() {
  return (
    <div className="pointer-events-none absolute right-9 bottom-4 flex items-center whitespace-nowrap">
      <svg viewBox="0 0 50 42" className="h-[42px] w-[50px] drop-shadow-[1px_1px_0_#777]">
        <path d="M17 1C8 1 1 7 1 15c0 4.500 2.300 8 6 10.500L5.500 31l6-3c8 2 21-1 21.500-13C33 7 26 1 17 1z" fill="#fff" opacity=".93" />
        <circle cx="11.500" cy="10.500" r="2.200" fill="#7c51ab" /><circle cx="23.500" cy="10.500" r="2.200" fill="#8f8f8f" />
        <path d="M33 14.500c-8.500 0-15 5.500-15 12.500s6.500 12.500 15 12.500c1.800 0 3.500-.2 5-.8l5 2.800-1.300-4.500c3.500-2.400 5.800-6 5.800-10 0-7-6.300-12.500-14.500-12.500z" fill="#fff" stroke="#9a9a9a" strokeWidth=".8" />
        <circle cx="28" cy="23" r="1.800" fill="#777" /><circle cx="38" cy="23" r="1.800" fill="#777" />
      </svg>
      <span className="pl-1 text-[27px] leading-[34px] text-white [text-shadow:1px_1px_1px_#555,0_0_1px_#888]">deepwind数据分析</span>
    </div>
  );
}

export default function App() {
  return (
    <div lang="zh-CN" className="min-h-screen bg-white font-['Noto_Sans','Noto_Sans_CJK_SC',sans-serif]">
      <Header />
      <div className="relative flex overflow-hidden">
        <div className="flex min-w-0 flex-1 flex-col">
          <div className="flex">
            <Canvas />
            <aside className="flex w-6 shrink-0 flex-col items-center border-l border-[#a78bc9] bg-[#9256c2] text-white">
              <button type="button" aria-label="展开筛选器" className="flex h-9 items-center"><Chevron dir="left" className="h-2.5 w-2.5" /></button>
              <svg viewBox="0 0 10 10" className="mt-2.5 h-2.5 w-2.5" fill="none" stroke="#fff"><path d="M9 1v8L5.500 6H1V4h4.500z" /></svg>
              <h2 className="mt-1.5 text-[12px] leading-4 font-bold [text-orientation:sideways] [writing-mode:vertical-rl]">筛选器</h2>
            </aside>
          </div>
          <PageTabs />
        </div>
        <VizPane />
        <FieldsPane />
        <Watermark />
      </div>
    </div>
  );
}
